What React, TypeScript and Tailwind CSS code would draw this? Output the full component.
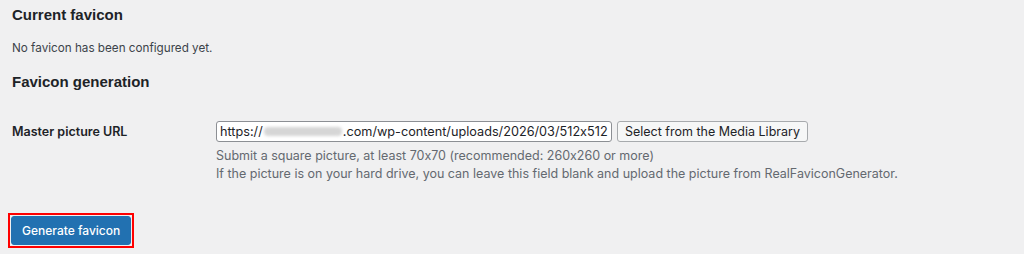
import React from "react";

const body = { fontFamily: 'Inter, "Liberation Sans", Arial, sans-serif', fontFeatureSettings: '"calt" 0' };

export default function App() {
  return (
    <div
      className="w-[1024px] h-[254px] bg-[#f0f0f1] text-[#1d2327] px-3 overflow-hidden"
      style={{ fontFamily: '"Liberation Sans", Arial, sans-serif' }}
    >
      <h2 className="text-[15px] font-semibold leading-[20px] pt-[5px]">Current favicon</h2>
      <p className="text-[11.7px] leading-[16px] mt-[15px] text-[#3c434a]" style={body}>
        No favicon has been configured yet.
      </p>
      <h2 className="text-[15px] font-semibold leading-[20px] mt-[16px]">Favicon generation</h2>
      <div className="flex mt-[29px]" style={body}>
        <div className="w-[204px] shrink-0 pt-[3px] text-[12.5px] font-semibold leading-[16px]">
          Master picture URL
        </div>
        <div className="flex flex-col">
          <div className="flex items-center gap-[5px]">
            <div className="w-[396px] h-[21px] border border-[#8c8f94] rounded-[3px] bg-white flex items-center px-[3px] text-[12.7px] overflow-hidden whitespace-nowrap">
              <span>https://</span>
              <span className="inline-block w-[78px] h-[9px] mx-[1px] rounded-[4px] bg-[#d6d6d6] blur-[1.5px] shrink-0"></span>
              <span>.com/wp-content/uploads/2026/03/512x512</span>
            </div>
            <button className="h-[21px] px-[7px] border border-[#a7aaad] rounded-[3px] bg-[#f6f7f7] text-[12.5px] leading-[19px] text-[#1d2327]">
              Select from the Media Library
            </button>
          </div>
          <p className="text-[12.5px] leading-[18px] mt-[5px] text-[#646970]">
            Submit a square picture, at least 70x70 (recommended: 260x260 or more)
          </p>
          <p className="text-[12.5px] leading-[18px] text-[#646970]">
            If the picture is on your hard drive, you can leave this field blank and upload the picture from RealFaviconGenerator.
          </p>
        </div>
      </div>
      <div className="mt-[30px] -ml-[4px] inline-block border-2 border-[#ff0000] p-[1px]" style={body}>
        <button className="h-[29px] px-[10px] rounded-[3px] bg-[#2271b1] border border-[#2271b1] text-white text-[12px] font-medium leading-[27px]">
          Generate favicon
        </button>
      </div>
    </div>
  );
}
